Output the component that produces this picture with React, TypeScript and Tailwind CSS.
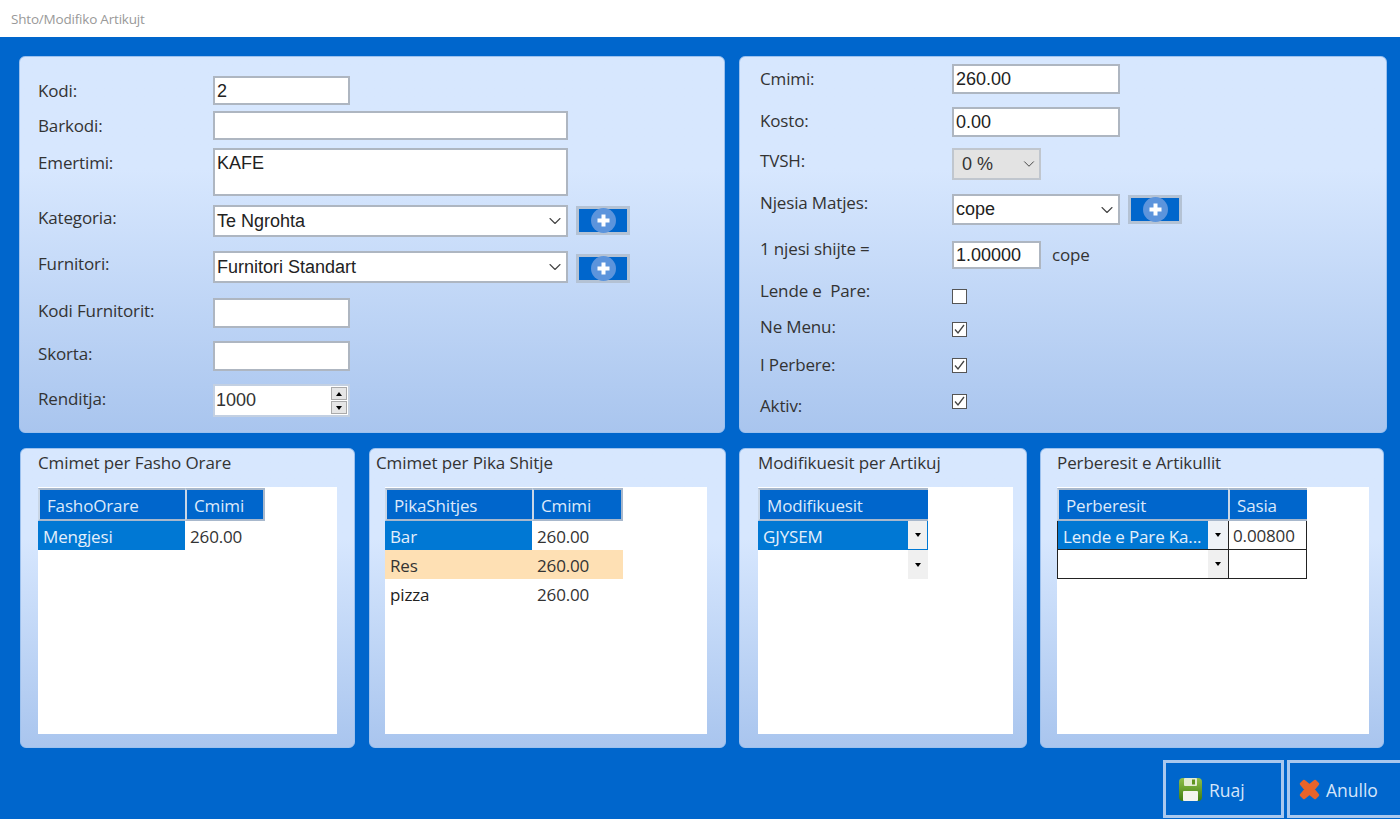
import { ChevronDown } from "lucide-react";
import type { ReactNode } from "react";

const SEGOE = "font-['Open_Sans',sans-serif]";
const ARIAL = "font-['Liberation_Sans',Arial,sans-serif]";
const BOX = "bg-white border-2 border-[#aeb6c1]";

function Label(props: { children: ReactNode; className: string }) {
  return (
    <div className={`h-6 shrink-0 text-[17px] leading-6 tracking-[-0.15px] text-[#333] whitespace-pre ${SEGOE} ${props.className}`}>
      {props.children}
    </div>
  );
}

function TextBox(props: { value?: string; className: string }) {
  return (
    <div className={`${BOX} px-[2px] text-[18px] leading-[27px] text-[#222] ${ARIAL} ${props.className}`}>
      {props.value}
    </div>
  );
}

function Combo(props: { value: string; className: string }) {
  return (
    <div className={`${BOX} flex items-center justify-between px-[2px] text-[18px] text-[#222] ${ARIAL} ${props.className}`}>
      <span>{props.value}</span>
      <ChevronDown size={20} strokeWidth={1.3} className="-mr-[1px] text-[#444]" />
    </div>
  );
}

function PlusButton(props: { className: string }) {
  return (
    <div className={`ml-2 flex h-[29px] w-[54px] shrink-0 items-center justify-center border-[3px] border-[#b4c2d4] bg-[#0066cc] ${props.className}`}>
      <div className="flex h-[25px] w-[25px] items-center justify-center rounded-full bg-[#5c94dc]">
        <svg width="15" height="15" viewBox="0 0 15 15">
          <path d="M5.5 1.5h4v4h4v4h-4v4h-4v-4h-4v-4h4z" fill="#fff" />
        </svg>
      </div>
    </div>
  );
}

function CheckBox(props: { checked?: boolean }) {
  return (
    <div className="flex h-[15px] w-[15px] items-center justify-center border border-[#555] bg-white">
      {props.checked && (
        <svg width="13" height="13" viewBox="0 0 13 13" fill="none">
          <path d="M2 6.5l3 3.5 6-8" stroke="#444" strokeWidth="1.3" />
        </svg>
      )}
    </div>
  );
}

function Panel(props: { children: ReactNode; className: string }) {
  return (
    <div className={`shrink-0 rounded-[6px] border border-[#9cc1ee] bg-gradient-to-b from-[#d7e7fe] from-30% to-[#a9c5ee] ${props.className}`}>
      {props.children}
    </div>
  );
}

function HeaderCell(props: { children: string; className: string }) {
  return (
    <div className={`h-[33px] border-y-2 border-l-2 border-y-[#a8b8cc] border-l-[#c9d6e6] bg-[#0066cc] pl-[7px] text-[17px] leading-[31px] tracking-[-0.15px] text-[#dce9fa] ${SEGOE} ${props.className}`}>
      {props.children}
    </div>
  );
}

function Cell(props: { children?: string; className: string }) {
  return (
    <div className={`h-[29px] truncate pl-[5px] text-[17px] leading-[31px] tracking-[-0.15px] ${SEGOE} ${props.className}`}>
      {props.children}
    </div>
  );
}

function DropTab(props: { className: string }) {
  return (
    <div className={`flex w-5 shrink-0 items-center justify-center ${props.className}`}>
      <div className="h-0 w-0 border-x-[3px] border-t-[4px] border-x-transparent border-t-black" />
    </div>
  );
}

function GridPanel(props: { title: string; titleClass: string; className: string; listClass: string; children: ReactNode }) {
  return (
    <Panel className={`flex h-[300px] flex-col pb-[13px] pt-[2px] ${props.className}`}>
      <div className={`h-6 text-[17px] leading-6 tracking-[-0.1px] text-[#333] ${SEGOE} ${props.titleClass}`}>{props.title}</div>
      <div className={`mt-3 flex-1 bg-white pt-px ${props.listClass}`}>{props.children}</div>
    </Panel>
  );
}

export default function App() {
  return (
    <div className="flex h-[819px] w-[1400px] flex-col overflow-hidden bg-[#0066cc]">
      <div className={`h-[37px] shrink-0 bg-white pl-[11px] text-[13.5px] leading-[38px] tracking-[-0.2px] text-[#999] ${SEGOE}`}>
        Shto/Modifiko Artikujt
      </div>

      <div className="mt-[19px] flex gap-[14px] pl-[19px]">
        <Panel className="h-[377px] w-[706px] pl-[18px] pt-[19px]">
          <div className="flex h-[29px]">
            <Label className="mt-[3px] w-[175px]">Kodi:</Label>
            <TextBox value="2" className="w-[137px]" />
          </div>
          <div className="mt-[6px] flex h-[29px]">
            <Label className="mt-[3px] w-[175px]">Barkodi:</Label>
            <TextBox className="w-[355px]" />
          </div>
          <div className="mt-2 flex h-[48px]">
            <Label className="mt-[3px] w-[175px]">Emertimi:</Label>
            <TextBox value="KAFE" className="w-[355px]" />
          </div>
          <div className="mt-[9px] flex h-8">
            <Label className="mt-px w-[175px]">Kategoria:</Label>
            <Combo value="Te Ngrohta" className="w-[355px]" />
            <PlusButton className="mt-px" />
          </div>
          <div className="mt-[14px] flex h-8">
            <Label className="mt-px w-[175px]">Furnitori:</Label>
            <Combo value="Furnitori Standart" className="w-[355px]" />
            <PlusButton className="mt-[3px]" />
          </div>
          <div className="mt-[15px] flex h-[30px]">
            <Label className="mt-px w-[175px]">Kodi Furnitorit:</Label>
            <TextBox className="w-[137px]" />
          </div>
          <div className="mt-[13px] flex h-[30px]">
            <Label className="mt-px w-[175px]">Skorta:</Label>
            <TextBox className="w-[137px]" />
          </div>
          <div className="mt-[13px] flex h-[33px]">
            <Label className="mt-[3px] w-[175px]">Renditja:</Label>
            <div className="flex w-[137px] items-center justify-between border-2 border-[#c3d0e2] bg-white pl-px pr-px text-[18px] text-[#333]">
              <span className={ARIAL}>1000</span>
              <div className="flex flex-col gap-px">
                <div className="flex h-[13px] w-4 items-center justify-center border border-[#aaa] bg-[#e6e6e6]">
                  <div className="h-0 w-0 border-x-[3px] border-b-[4px] border-x-transparent border-b-black" />
                </div>
                <div className="flex h-[13px] w-4 items-center justify-center border border-[#aaa] bg-[#e6e6e6]">
                  <div className="h-0 w-0 border-x-[3px] border-t-[4px] border-x-transparent border-t-black" />
                </div>
              </div>
            </div>
          </div>
        </Panel>

        <Panel className="h-[377px] w-[648px] pl-5 pt-[7px]">
          <div className="flex h-[30px]">
            <Label className="mt-[3px] w-[192px]">Cmimi:</Label>
            <TextBox value="260.00" className="w-[168px]" />
          </div>
          <div className="mt-[13px] flex h-[30px]">
            <Label className="mt-[2px] w-[192px]">Kosto:</Label>
            <TextBox value="0.00" className="w-[168px]" />
          </div>
          <div className="mt-[11px] flex h-8">
            <Label className="mt-px w-[192px]">TVSH:</Label>
            <div className={`flex w-[89px] items-center justify-between border-2 border-[#c0c6ce] bg-[#e3e3e3] pl-2 pr-px text-[18px] text-[#333] ${ARIAL}`}>
              <span>0 %</span>
              <ChevronDown size={18} strokeWidth={1.3} className="text-[#444]" />
            </div>
          </div>
          <div className="mt-[14px] flex h-[31px]">
            <Label className="-mt-[3px] w-[192px]">Njesia Matjes:</Label>
            <Combo value="cope" className="w-[168px]" />
            <PlusButton className="mt-px" />
          </div>
          <div className="mt-4 flex h-7">
            <Label className="-mt-1 w-[192px]">1 njesi shijte =</Label>
            <TextBox value="1.00000" className="w-[89px] !leading-[24px]" />
            <div className={`ml-[11px] text-[17px] leading-7 tracking-[-0.15px] text-[#333] ${SEGOE}`}>cope</div>
          </div>
          <div className="mt-5 flex h-[15px]">
            <Label className="-mt-[10px] w-[192px]">{"Lende e  Pare:"}</Label>
            <CheckBox />
          </div>
          <div className="mt-[18px] flex h-[15px]">
            <Label className="-mt-[7px] w-[192px]">Ne Menu:</Label>
            <CheckBox checked />
          </div>
          <div className="mt-[21px] flex h-[15px]">
            <Label className="-mt-[5px] w-[192px]">I Perbere:</Label>
            <CheckBox checked />
          </div>
          <div className="mt-[21px] flex h-[15px]">
            <Label className="w-[192px]">Aktiv:</Label>
            <CheckBox checked />
          </div>
        </Panel>
      </div>

      <div className="mt-[15px] flex pl-5">
        <GridPanel title="Cmimet per Fasho Orare" titleClass="pl-[17px]" className="w-[335px]" listClass="ml-[17px] mr-[17px]">
          <div className="flex">
            <HeaderCell className="w-[147px]">FashoOrare</HeaderCell>
            <HeaderCell className="w-20 border-r-2 border-r-[#a8b8cc]">Cmimi</HeaderCell>
          </div>
          <div className="flex">
            <Cell className="w-[147px] bg-[#0078d4] text-[#e4effb]">Mengjesi</Cell>
            <Cell className="w-20 text-[#333]">260.00</Cell>
          </div>
        </GridPanel>

        <GridPanel title="Cmimet per Pika Shitje" titleClass="pl-[6px]" className="ml-[14px] w-[357px]" listClass="ml-[15px] mr-[18px]">
          <div className="flex">
            <HeaderCell className="w-[147px]">PikaShitjes</HeaderCell>
            <HeaderCell className="w-[91px] border-r-2 border-r-[#a8b8cc]">Cmimi</HeaderCell>
          </div>
          <div className="flex">
            <Cell className="w-[147px] bg-[#0078d4] text-[#e4effb]">Bar</Cell>
            <Cell className="w-[91px] text-[#333]">260.00</Cell>
          </div>
          <div className="flex w-[238px] bg-[#fee0b4]">
            <Cell className="w-[147px] text-[#333]">Res</Cell>
            <Cell className="w-[91px] text-[#333]">260.00</Cell>
          </div>
          <div className="flex">
            <Cell className="w-[147px] text-[#222]">pizza</Cell>
            <Cell className="w-[91px] text-[#333]">260.00</Cell>
          </div>
        </GridPanel>

        <GridPanel title="Modifikuesit per Artikuj" titleClass="pl-[18px]" className="ml-[13px] w-[288px]" listClass="ml-[18px] mr-[13px]">
          <HeaderCell className="w-[170px]">Modifikuesit</HeaderCell>
          <div className="flex w-[170px]">
            <Cell className="flex-1 bg-[#0078d4] text-[#e4effb]">GJYSEM</Cell>
            <DropTab className="border-b border-r border-[#0078d4] bg-[#f0f0f0]" />
          </div>
          <div className="flex h-[29px] w-[170px] justify-end">
            <DropTab className="bg-[#f0f0f0]" />
          </div>
        </GridPanel>

        <GridPanel title="Perberesit e Artikullit" titleClass="pl-4" className="ml-[13px] w-[344px]" listClass="ml-4 mr-[14px]">
          <div className="flex">
            <HeaderCell className="w-[171px]">Perberesit</HeaderCell>
            <HeaderCell className="w-[79px]">Sasia</HeaderCell>
          </div>
          <div className="w-[250px] border-x border-b border-[#222]">
            <div className="flex border-b border-[#222]">
              <div className="flex h-[28px] w-[170px] bg-[#0078d4]">
                <Cell className="flex-1 text-[#e4effb]">Lende e Pare Ka...</Cell>
                <DropTab className="bg-[#eef2f7]" />
              </div>
              <div className={`h-[28px] flex-1 border-l border-[#222] pl-[4px] text-[17px] leading-[29px] tracking-[-0.15px] text-[#333] ${SEGOE}`}>0.00800</div>
            </div>
            <div className="flex">
              <div className="flex h-[28px] w-[170px] justify-end">
                <DropTab className="bg-[#f0f0f0]" />
              </div>
              <div className="h-[28px] flex-1 border-l border-[#222]" />
            </div>
          </div>
        </GridPanel>
      </div>

      <div className="mt-3 flex flex-1 justify-end gap-[3px] pb-px">
        <div className={`flex w-[121px] items-center border-[3px] border-[#a9c8ee] pl-[12px] text-[17.5px] text-[#d5e5fa] ${SEGOE}`}>
          <svg width="25" height="25" viewBox="0 0 25 25">
            <defs>
              <linearGradient id="floppy" x1="0" y1="0" x2="0" y2="1">
                <stop offset="0" stopColor="#8fbf4a" />
                <stop offset="1" stopColor="#3f7d10" />
              </linearGradient>
            </defs>
            <path d="M5 1h15a4 4 0 0 1 4 4v15a4 4 0 0 1-4 4H5a4 4 0 0 1-4-4V5a4 4 0 0 1 4-4z" fill="url(#floppy)" />
            <rect x="6" y="1" width="13" height="8" rx="1" fill="#e3ecd2" />
            <rect x="14" y="2.5" width="3" height="5" fill="#5f9420" />
            <rect x="5" y="14" width="15" height="10" rx="1" fill="#f4f4ee" />
          </svg>
          <span className="ml-[6px] mt-[3px]">Ruaj</span>
        </div>
        <div className={`flex w-[113px] items-center border-y-[3px] border-l-[3px] border-[#a9c8ee] pl-[9px] text-[17.5px] text-[#d5e5fa] ${SEGOE}`}>
          <svg width="21" height="21" viewBox="0 0 21 21">
            <path d="M5 2l5.5 4.5L16 2l3 3-4.500 5.500L19 16l-3 3-5.500-4.500L5 19l-3-3 4.500-5.500L2 5z" fill="#e8642a" stroke="#e8642a" strokeWidth="2.5" strokeLinejoin="round" />
          </svg>
          <span className="ml-[6px] mt-[3px]">Anullo</span>
        </div>
      </div>
    </div>
  );
}
